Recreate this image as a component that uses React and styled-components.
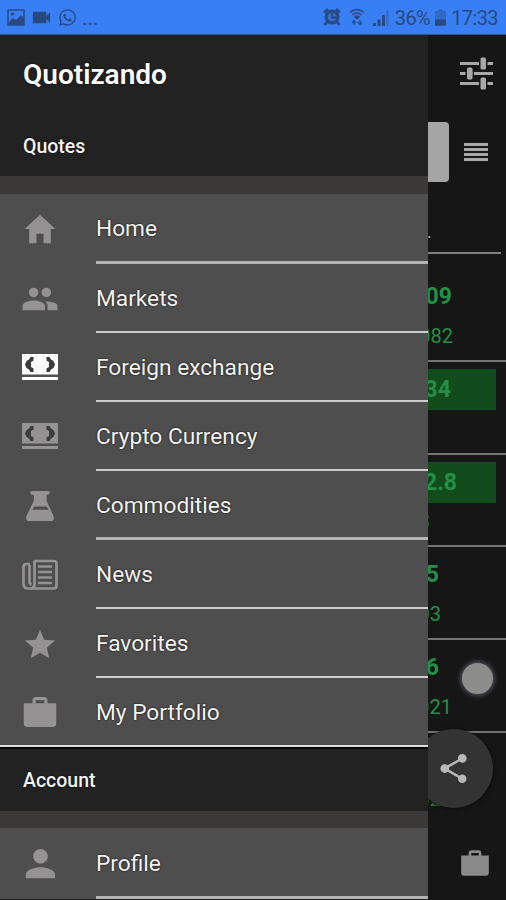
import styled, { createGlobalStyle } from 'styled-components';
import { IoMdHome, IoMdPeople, IoMdStar, IoMdBriefcase, IoMdPerson, IoMdShare } from 'react-icons/io';
import { MdVideocam } from 'react-icons/md';
import { FaWhatsapp } from 'react-icons/fa';

const CashIcon = () => (
    <svg width="36" height="27" viewBox="0 0 36 27" fill="currentColor">
        <path d="M0 0h36v20.500H0zM0 23h36v3H0z" />
        <path d="M11.500 3v3.500L9 8v5l2.500 1.500V18H8.500L7 15.500 4.500 14 3 10.500 4.500 7 7 5.500 8.500 3z" fill="#3c3c3c" />
        <path d="M24.500 3v3.500L27 8v5l-2.500 1.500V18h3L29 15.500l2.500-1.500L33 10.500 31.500 7 29 5.500 27.500 3z" fill="#3c3c3c" />
    </svg>
);

const FlaskIcon = () => (
    <svg width="34" height="34" viewBox="0 0 36 34" fill="currentColor">
        <path d="M9.500 1h17a1.500 1.500 0 0 1 0 4H25v6.500L32.300 27.500Q34 33 29 33H7Q2 33 3.700 27.500L11.500 11.500V5h-2a1.500 1.500 0 0 1 0-4z" />
        <path d="M12 17.500h13l2 3.500H10z" fill="#4e4e4e" />
    </svg>
);

const NewsIcon = () => (
    <svg width="36" height="31" viewBox="0 0 36 31" fill="none" stroke="currentColor" strokeWidth="2.7">
        <path d="M12 2h20q2.500 0 2.500 2.500v22q0 3-3 3H6q-4.500 0-4.500-5V8q0-3 3-3H8" />
        <path d="M12.500 2v23q0 4.500-4 4.500M7.500 6v17q0 2 2 2" />
        <path d="M16 7.500h14M16 13h14M16 18.500h14M16 24h14" />
    </svg>
);

const OptionsIcon = () => (
    <svg width="33" height="33" viewBox="0 0 33 33" fill="currentColor">
        <path d="M0 5h33v3H0zM0 15h33v3H0zM0 25h33v3H0z" />
        <path d="M19 4h2v5h-2zM26 4h1.500v5H26zM5.500 14h2v5h-2zM12.500 14H14v5h-1.500zM19 24h2v5h-2zM26 24h1.500v5H26z" fill="#161616" />
        <rect x="20.500" y="0.5" width="5.500" height="12" rx="1.500" />
        <rect x="7" y="10.500" width="5.500" height="12" rx="1.500" />
        <rect x="20.500" y="20.500" width="5.500" height="12" rx="1.500" />
    </svg>
);

const ListIcon = () => (
    <svg width="24" height="20" viewBox="0 0 24 20" fill="currentColor">
        <path d="M0 1h24v3H0zM0 6h24v3H0zM0 11h24v3H0zM0 16h24v3H0z" />
    </svg>
);

const AlarmIcon = () => (
    <svg width="18" height="18" viewBox="0 0 18 18">
        <path d="M1 4.500L5 1M17 4.500L13 1M4 14l-2.500 3M14 14l2.500 3" stroke="currentColor" strokeWidth="2.500" />
        <circle cx="9" cy="9" r="7.500" fill="currentColor" />
        <circle cx="9" cy="9" r="4.300" fill="#356fcf" />
        <path d="M9 5v4.500h4" fill="none" stroke="currentColor" strokeWidth="1.800" />
    </svg>
);

const quotesMenu = [
    { label: 'Home', icon: IoMdHome, height: 70, line: 3 },
    { label: 'Markets', icon: IoMdPeople, size: 40 },
    { label: 'Foreign exchange', icon: CashIcon, active: true },
    { label: 'Crypto Currency', icon: CashIcon },
    { label: 'Commodities', icon: FlaskIcon, line: 3 },
    { label: 'News', icon: NewsIcon },
    { label: 'Favorites', icon: IoMdStar },
    { label: 'My Portfolio', icon: IoMdBriefcase, size: 40, last: true },
];

const accountMenu = [
    { label: 'Profile', icon: IoMdPerson, size: 39, height: 71, line: 3 },
];

// end and subEnd are the free space on the right of each number
const quotes = [
    { value: '09', end: 54, sub: '082', subEnd: 53 },
    { value: '34', end: 55, sub: '', subEnd: 60, up: true },
    { value: '2.8', end: 49, sub: '3', subEnd: 76, up: true },
    { value: '5', end: 67, sub: '03', subEnd: 65 },
    { value: '6', end: 67, sub: '021', subEnd: 54 },
    { value: '', end: 67, sub: '02', subEnd: 65, last: true },
];

function StatusBar() {
    return (
        <Status>
            <StatusGroup $gap={5}>
                <svg width="18" height="17" viewBox="0 0 18 17">
                    <path d="M1 1h16v15H1z" fill="none" stroke="currentColor" strokeWidth="1.500" />
                    <path d="M2 13l4-4 3 2 5-5 3 3v7H2z" fill="currentColor" />
                    <circle cx="5.500" cy="5" r="1.600" fill="currentColor" />
                </svg>
                <MdVideocam size={23} />
                <FaWhatsapp size={19} />
                <Dots>...</Dots>
            </StatusGroup>

            <StatusGroup $gap={5}>
                <AlarmIcon />
                <Wifi width="16" height="18" viewBox="0 0 16 18" fill="none" stroke="currentColor" strokeWidth="1.6">
                    <path d="M1 4.5Q8-1.5 15 4.5M3.5 7Q8 3 12.5 7" />
                    <path d="M6 9Q8 7 10 9L8 10.500z" fill="currentColor" />
                    <path d="M5 17v-4M3 15l2-2.5L7 15M11 12v4M9 14l2 2.5 2-2.5" strokeWidth="1.2" />
                </Wifi>
                <svg width="18" height="17" viewBox="0 0 18 17" fill="currentColor">
                    <path d="M1 14h3v3H1zM5.5 10.500h3V17h-3zM10 6h3v11h-3z" />
                    <path d="M14.500 1h2v16h-2z" opacity="0.4" />
                </svg>
                <StatusText>36%</StatusText>
                <svg width="11" height="17" viewBox="0 0 12 18" fill="currentColor">
                    <path d="M3.500 0h5v2H12v9H0V2h3.500z" opacity="0.4" />
                    <path d="M0 11h12v7H0z" />
                </svg>
                <StatusText>17:33</StatusText>
            </StatusGroup>
        </Status>
    );
}

function MenuList({ items }) {
    return (
        <List>
            {items.map(({ label, icon: Icon, size = 38, active, height = 69, line = 2, last }) => (
                <Item key={label} $height={height} $line={last ? line : 0}>
                    <ItemIcon $active={active}><Icon size={size} /></ItemIcon>
                    <ItemLabel $line={last ? 0 : line}>{label}</ItemLabel>
                </Item>
            ))}
        </List>
    );
}

function Backdrop() {
    return (
        <Page>
            <Toolbar><OptionsIcon /></Toolbar>
            <SearchRow>
                <SearchBox />
                <ListIcon />
            </SearchRow>
            <TableHead>.</TableHead>
            {quotes.map((q, i) => (
                <QuoteRow key={i} $last={q.last}>
                    <Value $up={q.up} $end={q.end}>{q.value}</Value>
                    <Change $end={q.subEnd}>{q.sub}</Change>
                </QuoteRow>
            ))}
            <TabBar><IoMdBriefcase size={34} /></TabBar>
            <TouchDot />
            <Fab><IoMdShare size={35} /></Fab>
        </Page>
    );
}

function App() {
    return (
        <Screen>
            <GlobalStyle />
            <StatusBar />
            <Main>
                <Drawer>
                    <Title>Quotizando</Title>
                    <Section $height={60}>Quotes</Section>
                    <Strip $height={18} />
                    <MenuList items={quotesMenu} />
                    <Section $height={64} $edge>Account</Section>
                    <Strip $height={17} />
                    <MenuList items={accountMenu} />
                </Drawer>
                <Backdrop />
            </Main>
        </Screen>
    );
}


export default App


const GlobalStyle = createGlobalStyle `
    * {
        box-sizing: border-box;
    }

    body {
        margin: 0;
        background: #161616;
        font-family: Roboto, "Liberation Sans", sans-serif;
    }

    svg {
        display: block;
        flex: none;
    }
`;


const Screen = styled.div `
    display: flex;
    flex-direction: column;
    width: 506px;
    height: 900px;
    overflow: hidden;
`;


const Status = styled.div `
    display: flex;
    justify-content: space-between;
    align-items: center;
    flex: none;
    height: 35px;
    padding: 0 8px 0 7px;
    background: #387ef5;
    border-bottom: 1px solid #2c579f;
    color: #284a80;
`;


const StatusGroup = styled.div `
    display: flex;
    align-items: center;
    gap: ${({ $gap }) => $gap}px;
`;


const Wifi = styled.svg `
    margin: 0 2px 0 3px;
`;


const Dots = styled.span `
    font-size: 21px;
    line-height: 34px;
    padding-top: 2px;
`;


const StatusText = styled.span `
    padding-top: 2px;
    font-size: 20px;
    line-height: 34px;
    letter-spacing: -0.6px;
`;


const Main = styled.div `
    display: flex;
    flex: 1;
    min-height: 0;
`;


const Drawer = styled.div `
    width: 428px;
    flex: none;
    overflow: hidden;
    background: #222;
    color: #f4f4f4;
    text-shadow: 0 0 2px #000;
`;


const Title = styled.div `
    display: flex;
    align-items: center;
    height: 81px;
    padding: 0 23px 3px;
    color: #fff;
    font-size: 28px;
    font-weight: 600;
`;


const Section = styled.div `
    display: flex;
    align-items: center;
    height: ${({ $height }) => $height}px;
    padding: 0 23px;
    border-top: ${({ $edge }) => ($edge ? '2px solid #050505' : 'none')};
    font-size: 19.5px;
    font-weight: 500;
`;


const Strip = styled.div `
    height: ${({ $height }) => $height}px;
    background: #3b3838;
`;


const List = styled.div `
    background: #4e4e4e;
`;


const Item = styled.div `
    display: flex;
    height: ${({ $height }) => $height}px;
    border-bottom: ${({ $line }) => $line}px solid #ddd;
`;


const ItemIcon = styled.div `
    display: flex;
    justify-content: center;
    align-items: center;
    width: 80px;
    margin-right: 16px;
    color: ${({ $active }) => ($active ? '#fff' : '#949292')};
`;


const ItemLabel = styled.div `
    display: flex;
    align-items: center;
    flex: 1;
    padding-top: 2px;
    border-bottom: ${({ $line }) => $line}px solid ${({ $line }) => ($line === 3 ? '#b4b4b4' : '#ccc')};
    font-size: 22.7px;
`;


const Page = styled.div `
    position: relative;
    display: flex;
    flex-direction: column;
    flex: 1;
    min-width: 0;
    overflow: hidden;
    background: #161616;
    color: #a8a8a8;
`;


const Toolbar = styled.div `
    display: flex;
    justify-content: flex-end;
    align-items: center;
    flex: none;
    height: 76px;
    padding-right: 13px;
`;


const SearchRow = styled.div `
    display: flex;
    align-items: center;
    flex: none;
    height: 82px;
    gap: 15px;
`;


const SearchBox = styled.div `
    width: 21px;
    height: 60px;
    background: #a5a5a5;
    border-radius: 0 4px 4px 0;
`;


const TableHead = styled.div `
    flex: none;
    height: 61px;
    margin: 0 5px 15px 0;
    padding-top: 30px;
    border-bottom: 2px solid #808080;
    font-size: 18px;
    line-height: 18px;
    text-indent: -1px;
`;


const QuoteRow = styled.div `
    display: flex;
    flex-direction: column;
    flex: none;
    height: 92.8px;
    padding: 7px 0 0;
    border-bottom: 2px solid ${({ $last }) => ($last ? 'transparent' : '#747474')};
    color: #229047;
    white-space: nowrap;
`;


const Value = styled.div `
    display: flex;
    justify-content: flex-end;
    align-items: center;
    height: 41px;
    margin-right: 10px;
    padding-right: ${({ $end }) => $end - 10}px;
    background: ${({ $up }) => ($up ? '#124c1c' : 'transparent')};
    font-size: 23px;
    font-weight: 700;
`;


const Change = styled.div `
    display: flex;
    justify-content: flex-end;
    align-items: center;
    height: 37px;
    padding-right: ${({ $end }) => $end}px;
    font-size: 20px;
`;


const TabBar = styled.div `
    display: flex;
    justify-content: flex-end;
    align-items: center;
    flex: 1;
    padding-right: 14px;
    color: #8a8a8a;
`;


const TouchDot = styled.div `
    position: absolute;
    top: 628px;
    right: 13px;
    width: 31px;
    height: 31px;
    border-radius: 50%;
    background: #8d8d8b;
    box-shadow: 0 0 4px 2px #4a4a58;
`;


const Fab = styled.div `
    position: absolute;
    top: 694px;
    right: 13px;
    display: flex;
    justify-content: center;
    align-items: center;
    width: 79px;
    height: 79px;
    border-radius: 50%;
    background: #333;
    box-shadow: 0 1px 4px #0a0a0a;
    color: #b9b9b9;
`;
